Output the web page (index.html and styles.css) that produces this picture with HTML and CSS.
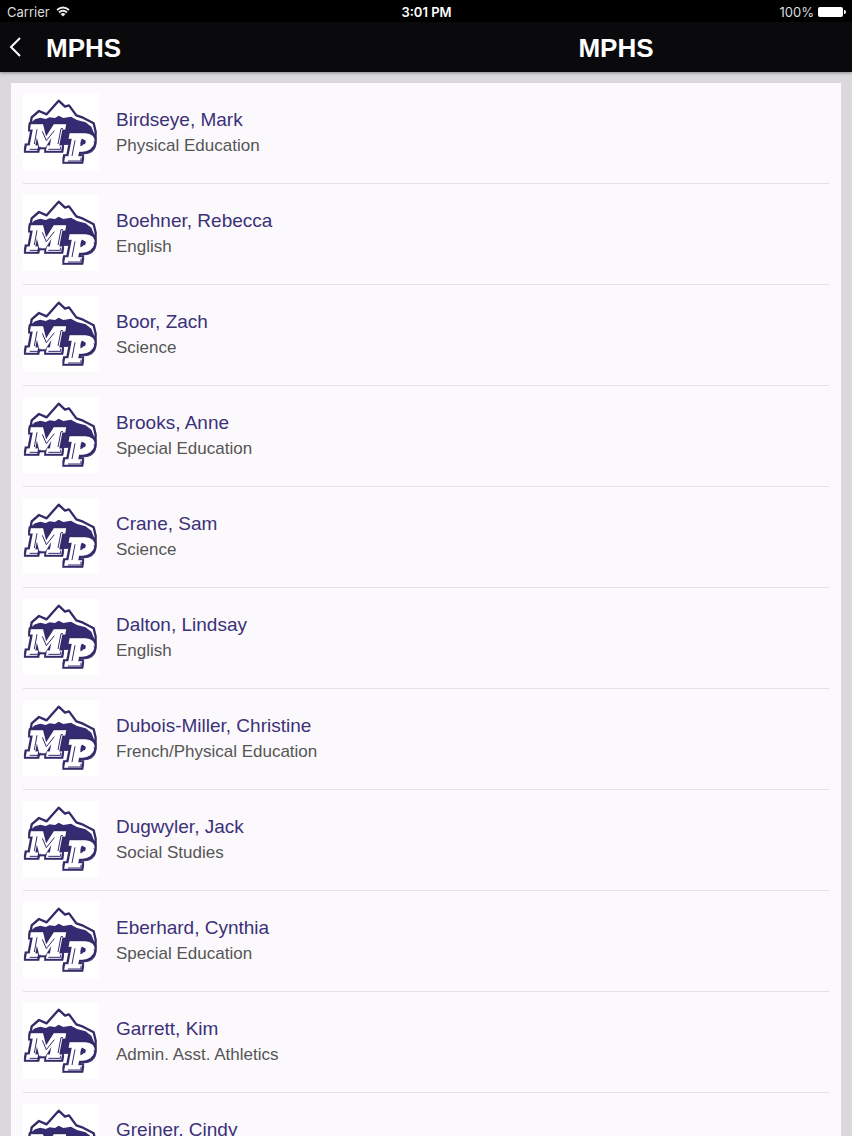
FILE: index.html
```html
<!DOCTYPE html>
<html lang="en">
<head>
<meta charset="utf-8">
<meta name="viewport" content="width=device-width, initial-scale=1">
<title>MPHS</title>
<link rel="stylesheet" href="styles.css">
</head>
<body>
<svg class="defs" aria-hidden="true">
  <filter id="letter-edge" x="-20%" y="-20%" width="140%" height="140%" color-interpolation-filters="sRGB">
    <feMorphology in="SourceAlpha" operator="dilate" radius="7" result="wide"/>
    <feFlood flood-color="#322b68"/>
    <feComposite in2="wide" operator="in" result="edge"/>
    <feMerge><feMergeNode in="edge"/><feMergeNode in="SourceGraphic"/></feMerge>
  </filter>
  <symbol id="mp-logo" viewBox="24 12 228 228">
    <rect x="24" y="12" width="228" height="228" fill="#fff"/>
    <path d="M44 110L47 98L60 88L76 83L92 87L104 82L120 84L131 77L145 84L168 80L186 90L212 97L229 110L238 132L240 160L150 165L60 140Z" fill="#352b72"/>
    <path d="M46 106L50 82L72 63L95 73L131 32L150 50L162 46L184 76L204 83L236 100L242 125L241 160" fill="none" stroke="#322b68" stroke-width="7" stroke-linejoin="round"/>
    <text class="letter letter-m" x="41" y="176">M</text>
    <text class="letter letter-p" x="156" y="211">P</text>
    <g fill="none" stroke="#352b72" stroke-width="3">
      <path d="M44 178H75V170M66 118L58 162M100 178H137V170M129 162L138 116H144"/>
      <path d="M82 124L94 152L118 122"/>
      <path d="M159 213H198V203M180 151L171 198M198 191H213Q233 188 239 175Q243 163 237 154"/>
      <path d="M198 150H210Q215 156 209 163H196Z" fill="#352b72" stroke="none"/>
    </g>
  </symbol>
</svg>

<header class="top">
  <div class="status">
    <div class="carrier">Carrier
      <svg class="wifi" viewBox="0 0 14 11" aria-hidden="true"><g fill="none" stroke="#eee" stroke-width="2"><path d="M1 4Q7 -1 13 4"/><path d="M3 6.500Q7 3 11 6.500"/></g><path d="M4.500 8Q7 6 9.500 8L7 10.500Z" fill="#eee"/></svg>
    </div>
    <div class="time">3:01 PM</div>
    <div class="power">100%
      <svg class="battery" viewBox="0 0 28 12" aria-hidden="true"><rect x="0" y="1" width="25" height="10" rx="2" fill="#fff"/><path d="M26 4Q28 4 28 6T26 8Z" fill="#fff"/></svg>
    </div>
  </div>
  <nav class="bar">
    <div class="back-area">
      <button class="back" type="button" aria-label="Back"><svg viewBox="0 0 12 20" aria-hidden="true"><path d="M11 1L2 10L11 19" fill="none" stroke="#fff" stroke-width="2"/></svg></button>
      <span class="title">MPHS</span>
    </div>
    <h1 class="title">MPHS</h1>
  </nav>
</header>

<main class="content">
  <ul class="staff">
    <li><svg class="logo" aria-hidden="true"><use href="#mp-logo"/></svg><div><a href="#" class="name">Birdseye, Mark</a><p class="role">Physical Education</p></div></li>
    <li><svg class="logo" aria-hidden="true"><use href="#mp-logo"/></svg><div><a href="#" class="name">Boehner, Rebecca</a><p class="role">English</p></div></li>
    <li><svg class="logo" aria-hidden="true"><use href="#mp-logo"/></svg><div><a href="#" class="name">Boor, Zach</a><p class="role">Science</p></div></li>
    <li><svg class="logo" aria-hidden="true"><use href="#mp-logo"/></svg><div><a href="#" class="name">Brooks, Anne</a><p class="role">Special Education</p></div></li>
    <li><svg class="logo" aria-hidden="true"><use href="#mp-logo"/></svg><div><a href="#" class="name">Crane, Sam</a><p class="role">Science</p></div></li>
    <li><svg class="logo" aria-hidden="true"><use href="#mp-logo"/></svg><div><a href="#" class="name">Dalton, Lindsay</a><p class="role">English</p></div></li>
    <li><svg class="logo" aria-hidden="true"><use href="#mp-logo"/></svg><div><a href="#" class="name">Dubois-Miller, Christine</a><p class="role">French/Physical Education</p></div></li>
    <li><svg class="logo" aria-hidden="true"><use href="#mp-logo"/></svg><div><a href="#" class="name">Dugwyler, Jack</a><p class="role">Social Studies</p></div></li>
    <li><svg class="logo" aria-hidden="true"><use href="#mp-logo"/></svg><div><a href="#" class="name">Eberhard, Cynthia</a><p class="role">Special Education</p></div></li>
    <li><svg class="logo" aria-hidden="true"><use href="#mp-logo"/></svg><div><a href="#" class="name">Garrett, Kim</a><p class="role">Admin. Asst. Athletics</p></div></li>
    <li><svg class="logo" aria-hidden="true"><use href="#mp-logo"/></svg><div><a href="#" class="name">Greiner, Cindy</a></div></li>
  </ul>
</main>
</body>
</html>
```

FILE: styles.css
```css
* { box-sizing: border-box; }

body {
  margin: 0;
  height: 100vh;
  display: flex;
  flex-direction: column;
  overflow: hidden;
  background: #dad8dc;
  font-family: "Liberation Sans", Arial, sans-serif;
}

.defs { position: absolute; width: 0; height: 0; }

.top {
  flex: none;
  background: #0a090b;
  color: #fff;
  box-shadow: 0 1px 3px #888;
}

.status {
  display: grid;
  grid-template-columns: 1fr auto 1fr;
  align-items: center;
  height: 22px;
  padding: 1px 6px 0 7px;
  background: #000;
  color: #ddd;
  font-family: Inter, Roboto, sans-serif;
  font-size: 13px;
}

.carrier, .power { display: flex; align-items: center; gap: 6px; }
.power { justify-content: flex-end; gap: 4px; }
.time { color: #fff; font-weight: 600; }
.wifi { width: 14px; height: 11px; }
.battery { width: 28px; height: 12px; }

.bar {
  display: grid;
  grid-template-columns: 380px 1fr;
  align-items: center;
  height: 50px;
}

.back-area { display: flex; align-items: center; }
.back {
  width: 46px;
  height: 50px;
  padding: 0 0 0 9px;
  border: 0;
  background: none;
  text-align: left;
}
.back svg { display: block; width: 12px; height: 20px; }

.title {
  margin: 0;
  padding-top: 2px;
  font-size: 26px;
  line-height: 32px;
  font-weight: 700;
}
h1.title { text-align: center; }

.content {
  flex: 1;
  min-height: 0;
  padding: 11px 11px 0;
  overflow: hidden;
}

.staff {
  margin: 0;
  padding: 0 12px;
  list-style: none;
  background: #fbf9fc;
}

.staff li {
  display: flex;
  align-items: flex-start;
  gap: 17px;
  height: 101px;
  padding-top: 11px;
  border-bottom: 1px solid #e4e2e6;
}

.logo { flex: none; width: 76px; height: 76px; }

.name {
  display: block;
  padding-top: 13px;
  color: #3b3178;
  font-size: 19px;
  line-height: 26px;
  text-decoration: none;
}

.role {
  margin: 0;
  color: #555;
  font-size: 17px;
  line-height: 26px;
}

.letter {
  font-family: "DejaVu Serif", serif;
  font-weight: 700;
  font-style: italic;
  fill: #fff;
  stroke: #fff;
  stroke-width: 10px;
  filter: url(#letter-edge);
}
.letter-m { font-size: 94px; }
.letter-p { font-size: 102px; }
```
